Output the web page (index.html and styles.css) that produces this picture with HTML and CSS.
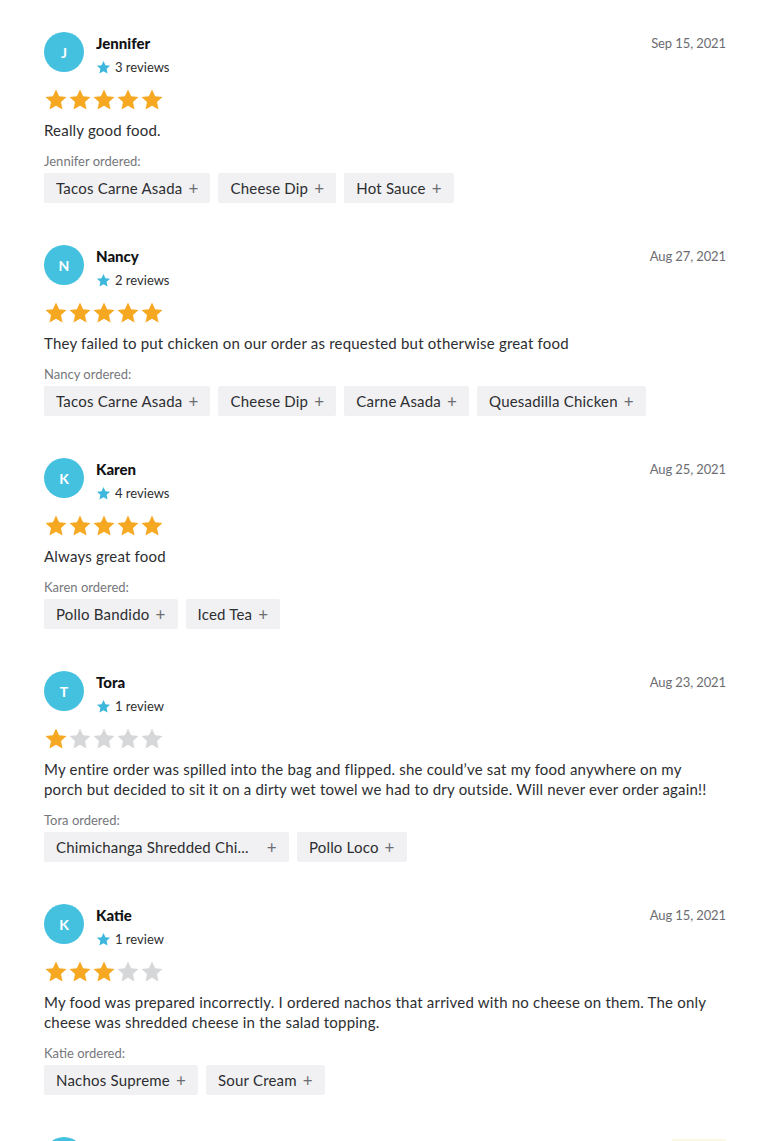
FILE: index.html
```html
<!DOCTYPE html>
<html>
<head>
<meta charset="utf-8">
<link rel="stylesheet" href="styles.css">
</head>
<body>
<svg width="0" height="0" class="defs">
  <defs>
    <symbol id="star" viewBox="0 0 24 24"><polygon points="12,1.5 15.1,8.3 22.5,9.1 17,14.1 18.5,21.5 12,17.8 5.5,21.5 7,14.1 1.5,9.1 8.9,8.3"/></symbol>
  </defs>
</svg>
<main class="list">

  <section class="review">
    <div class="head">
      <div class="avatar">J</div>
      <div class="who">
        <div class="name">Jennifer</div>
        <div class="count"><svg class="mini"><use href="#star"/></svg>3 reviews</div>
      </div>
      <div class="date">Sep 15, 2021</div>
    </div>
    <div class="stars"><svg class="s on"><use href="#star"/></svg><svg class="s on"><use href="#star"/></svg><svg class="s on"><use href="#star"/></svg><svg class="s on"><use href="#star"/></svg><svg class="s on"><use href="#star"/></svg></div>
    <p class="text">Really good food.</p>
    <div class="ordered">Jennifer ordered:</div>
    <div class="chips">
      <span class="chip"><span class="item">Tacos Carne Asada</span><span class="plus">+</span></span>
      <span class="chip"><span class="item">Cheese Dip</span><span class="plus">+</span></span>
      <span class="chip"><span class="item">Hot Sauce</span><span class="plus">+</span></span>
    </div>
  </section>

  <section class="review">
    <div class="head">
      <div class="avatar">N</div>
      <div class="who">
        <div class="name">Nancy</div>
        <div class="count"><svg class="mini"><use href="#star"/></svg>2 reviews</div>
      </div>
      <div class="date">Aug 27, 2021</div>
    </div>
    <div class="stars"><svg class="s on"><use href="#star"/></svg><svg class="s on"><use href="#star"/></svg><svg class="s on"><use href="#star"/></svg><svg class="s on"><use href="#star"/></svg><svg class="s on"><use href="#star"/></svg></div>
    <p class="text">They failed to put chicken on our order as requested but otherwise great food</p>
    <div class="ordered">Nancy ordered:</div>
    <div class="chips">
      <span class="chip"><span class="item">Tacos Carne Asada</span><span class="plus">+</span></span>
      <span class="chip"><span class="item">Cheese Dip</span><span class="plus">+</span></span>
      <span class="chip"><span class="item">Carne Asada</span><span class="plus">+</span></span>
      <span class="chip"><span class="item">Quesadilla Chicken</span><span class="plus">+</span></span>
    </div>
  </section>

  <section class="review">
    <div class="head">
      <div class="avatar">K</div>
      <div class="who">
        <div class="name">Karen</div>
        <div class="count"><svg class="mini"><use href="#star"/></svg>4 reviews</div>
      </div>
      <div class="date">Aug 25, 2021</div>
    </div>
    <div class="stars"><svg class="s on"><use href="#star"/></svg><svg class="s on"><use href="#star"/></svg><svg class="s on"><use href="#star"/></svg><svg class="s on"><use href="#star"/></svg><svg class="s on"><use href="#star"/></svg></div>
    <p class="text">Always great food</p>
    <div class="ordered">Karen ordered:</div>
    <div class="chips">
      <span class="chip"><span class="item">Pollo Bandido</span><span class="plus">+</span></span>
      <span class="chip"><span class="item">Iced Tea</span><span class="plus">+</span></span>
    </div>
  </section>

  <section class="review">
    <div class="head">
      <div class="avatar">T</div>
      <div class="who">
        <div class="name">Tora</div>
        <div class="count"><svg class="mini"><use href="#star"/></svg>1 review</div>
      </div>
      <div class="date">Aug 23, 2021</div>
    </div>
    <div class="stars"><svg class="s on"><use href="#star"/></svg><svg class="s"><use href="#star"/></svg><svg class="s"><use href="#star"/></svg><svg class="s"><use href="#star"/></svg><svg class="s"><use href="#star"/></svg></div>
    <p class="text">My entire order was spilled into the bag and flipped. she could’ve sat my food anywhere on my porch but decided to sit it on a dirty wet towel we had to dry outside. Will never ever order again!!</p>
    <div class="ordered">Tora ordered:</div>
    <div class="chips">
      <span class="chip"><span class="item">Chimichanga Shredded Chi...</span><span class="plus wide">+</span></span>
      <span class="chip"><span class="item">Pollo Loco</span><span class="plus">+</span></span>
    </div>
  </section>

  <section class="review">
    <div class="head">
      <div class="avatar">K</div>
      <div class="who">
        <div class="name">Katie</div>
        <div class="count"><svg class="mini"><use href="#star"/></svg>1 review</div>
      </div>
      <div class="date">Aug 15, 2021</div>
    </div>
    <div class="stars"><svg class="s on"><use href="#star"/></svg><svg class="s on"><use href="#star"/></svg><svg class="s on"><use href="#star"/></svg><svg class="s"><use href="#star"/></svg><svg class="s"><use href="#star"/></svg></div>
    <p class="text">My food was prepared incorrectly. I ordered nachos that arrived with no cheese on them. The only cheese was shredded cheese in the salad topping.</p>
    <div class="ordered">Katie ordered:</div>
    <div class="chips">
      <span class="chip"><span class="item">Nachos Supreme</span><span class="plus">+</span></span>
      <span class="chip"><span class="item">Sour Cream</span><span class="plus">+</span></span>
    </div>
  </section>

  <section class="review">
    <div class="head">
      <div class="avatar"></div>
      <div class="who"></div>
      <div class="badge"></div>
    </div>
  </section>

</main>
</body>
</html>
```

FILE: styles.css
```css
html, body {
  margin: 0;
  padding: 0;
  background: #ffffff;
}
body {
  font-family: Lato, "Liberation Sans", sans-serif;
  color: #2d2e31;
  overflow: hidden;
  height: 1141px;
}
.defs {
  position: absolute;
  width: 0;
  height: 0;
}
.list {
  padding: 32px 44px 0 44px;
}
.review {
  margin-bottom: 42px;
}
.head {
  display: flex;
  align-items: flex-start;
}
.avatar {
  width: 40px;
  height: 40px;
  border-radius: 50%;
  background: #45c1e0;
  color: #ffffff;
  font-size: 14px;
  font-weight: 700;
  display: flex;
  align-items: center;
  justify-content: center;
  flex: none;
}
.who {
  margin-left: 12px;
  flex: 1;
}
.name {
  font-size: 15px;
  font-weight: 900;
  line-height: 20px;
  margin-top: 1px;
  color: #111214;
}
.count {
  display: flex;
  align-items: center;
  font-size: 13px;
  line-height: 20px;
  margin-top: 4px;
  color: #2d2e31;
}
.mini {
  width: 15px;
  height: 15px;
  fill: #3db7dc;
  margin-right: 4px;
}
.date {
  font-size: 13px;
  line-height: 20px;
  color: #6c6d72;
  margin-top: 1px;
  letter-spacing: -0.1px;
}
.badge {
  width: 54px;
  height: 20px;
  margin-top: 2px;
  background: #fdf8e1;
}
.stars {
  display: flex;
  margin-top: 11px;
  height: 24px;
}
.s {
  width: 24px;
  height: 24px;
  fill: #d6d7d9;
}
.s.on {
  fill: #f7a823;
}
.text {
  margin: 8px 0 0 0;
  max-width: 674px;
  font-size: 15px;
  line-height: 20px;
  letter-spacing: 0.2px;
  color: #2d2e31;
}
.ordered {
  margin-top: 13px;
  font-size: 13px;
  line-height: 16px;
  color: #76777c;
}
.chips {
  margin-top: 4px;
  display: flex;
  gap: 8px;
}
.chip {
  display: inline-flex;
  align-items: center;
  height: 30px;
  padding: 0 12px;
  background: #f1f1f3;
  border-radius: 2px;
  font-size: 15px;
  letter-spacing: 0.2px;
  color: #2d2e31;
}
.item {
  white-space: nowrap;
}
.plus {
  margin-left: 6px;
  color: #6c6d72;
  font-size: 17px;
}
.plus.wide {
  margin-left: 18px;
}
```
